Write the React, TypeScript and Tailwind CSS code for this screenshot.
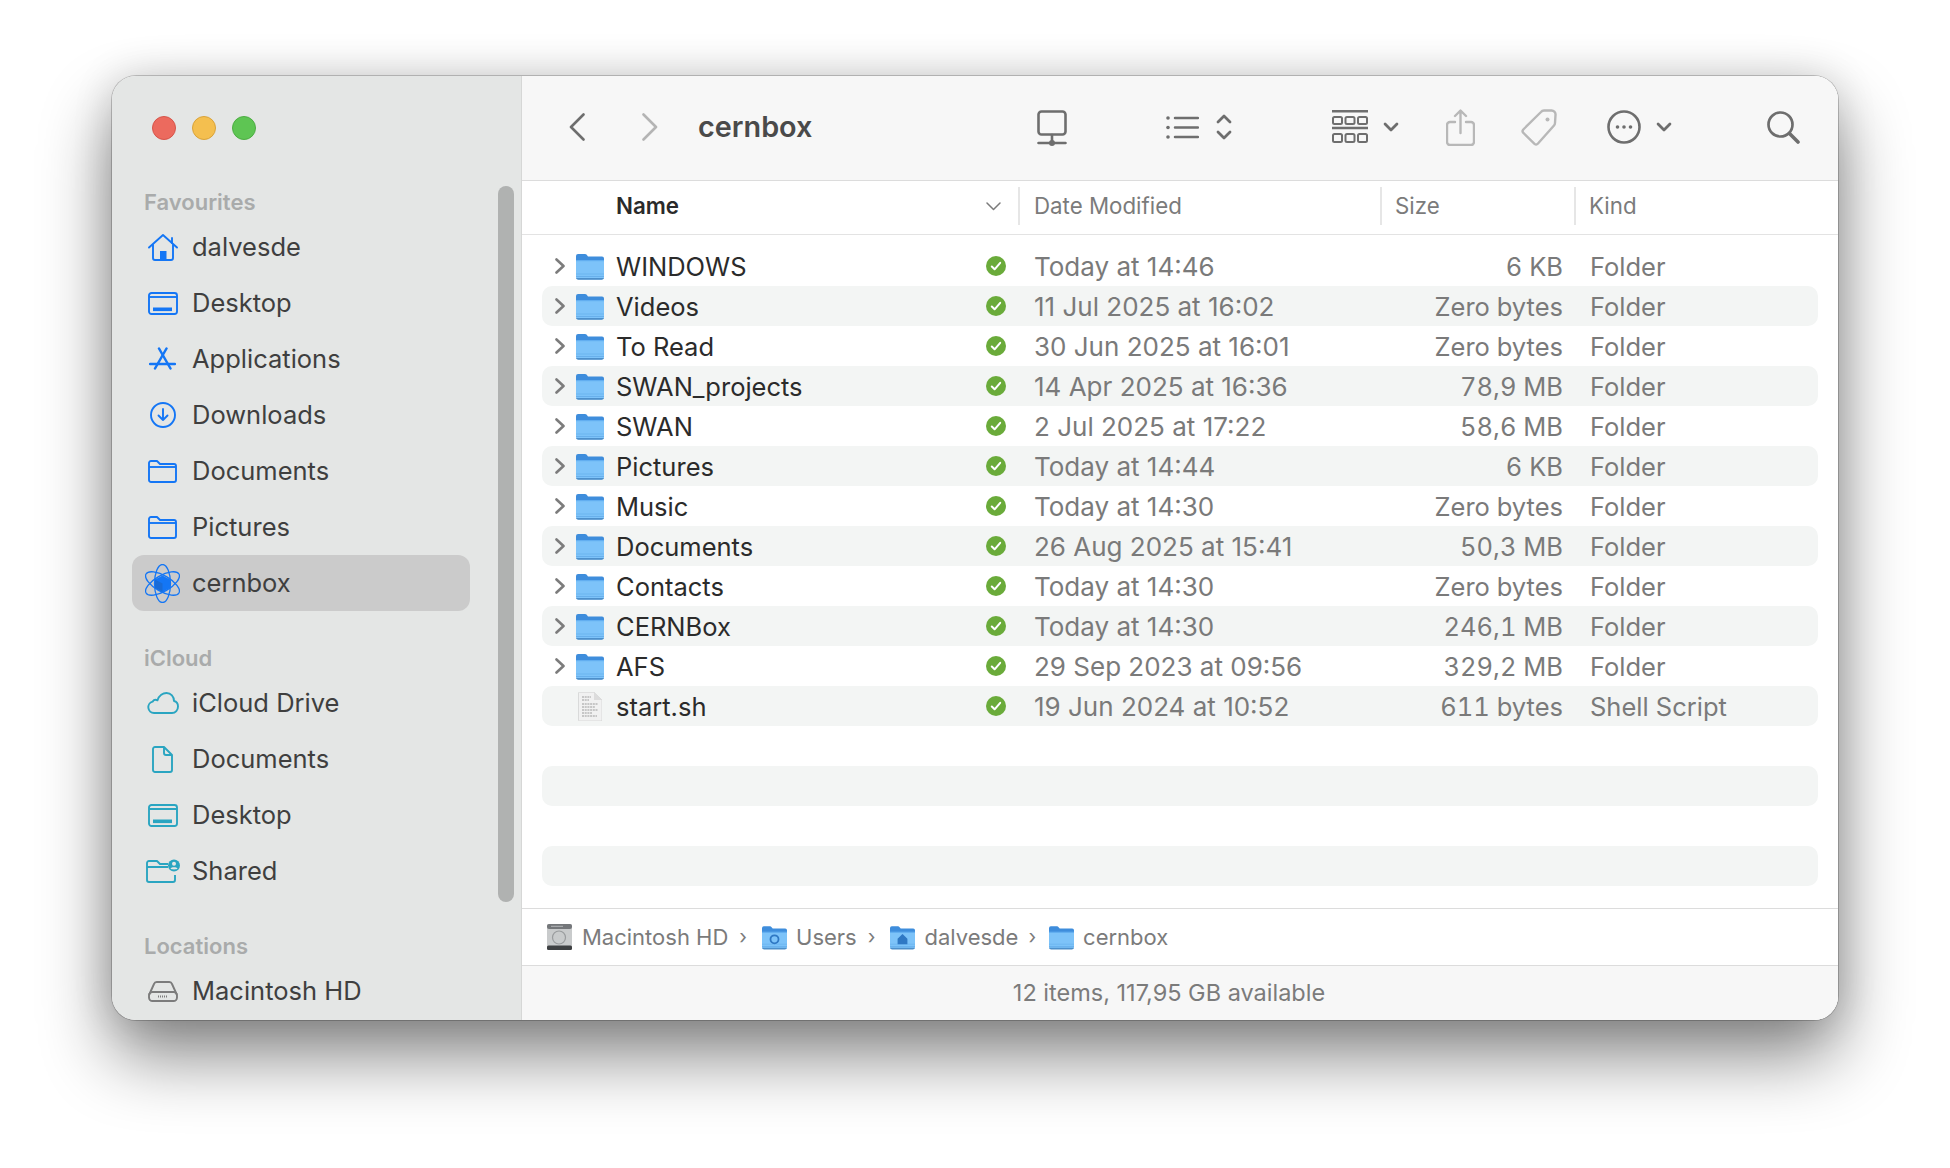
import type { ReactNode } from 'react';

const rows = [
  { name: 'WINDOWS', date: 'Today at 14:46', size: '6 KB', kind: 'Folder' },
  { name: 'Videos', date: '11 Jul 2025 at 16:02', size: 'Zero bytes', kind: 'Folder' },
  { name: 'To Read', date: '30 Jun 2025 at 16:01', size: 'Zero bytes', kind: 'Folder' },
  { name: 'SWAN_projects', date: '14 Apr 2025 at 16:36', size: '78,9 MB', kind: 'Folder' },
  { name: 'SWAN', date: '2 Jul 2025 at 17:22', size: '58,6 MB', kind: 'Folder' },
  { name: 'Pictures', date: 'Today at 14:44', size: '6 KB', kind: 'Folder' },
  { name: 'Music', date: 'Today at 14:30', size: 'Zero bytes', kind: 'Folder' },
  { name: 'Documents', date: '26 Aug 2025 at 15:41', size: '50,3 MB', kind: 'Folder' },
  { name: 'Contacts', date: 'Today at 14:30', size: 'Zero bytes', kind: 'Folder' },
  { name: 'CERNBox', date: 'Today at 14:30', size: '246,1 MB', kind: 'Folder' },
  { name: 'AFS', date: '29 Sep 2023 at 09:56', size: '329,2 MB', kind: 'Folder' },
  { name: 'start.sh', date: '19 Jun 2024 at 10:52', size: '611 bytes', kind: 'Shell Script' },
];

function HomeIcon() {
  return (
    <svg width="30" height="27" viewBox="0 0 30 27" fill="none" stroke="currentColor" strokeWidth="1.9" strokeLinejoin="round" strokeLinecap="round">
      <path d="M1 13.5 15 1l14 12.5" />
      <path d="M24 4v5" />
      <path d="M5 11v13a2 2 0 0 0 2 2h16a2 2 0 0 0 2-2V11" />
      <rect x="12" y="17" width="6.5" height="9" fill="currentColor" stroke="none" />
    </svg>
  );
}

function DesktopIcon() {
  return (
    <svg width="30" height="23" viewBox="0 0 30 23" fill="none" stroke="currentColor" strokeWidth="1.9">
      <rect x="1" y="1" width="28" height="21" rx="2.5" />
      <path d="M1 5h28" />
      <rect x="5" y="15.5" width="19" height="3.6" fill="currentColor" stroke="none" />
    </svg>
  );
}

function AppsIcon() {
  return (
    <svg width="27" height="24" viewBox="0 0 27 24" fill="none" stroke="currentColor" strokeWidth="2.5" strokeLinecap="round">
      <path d="M10 1.5 21.5 21.500" />
      <path d="M17.500 1.500 6 21.500" />
      <path d="M1 17h25" />
    </svg>
  );
}

function DownloadIcon() {
  return (
    <svg width="26" height="26" viewBox="0 0 26 26" fill="none" stroke="currentColor" strokeWidth="1.9" strokeLinecap="round" strokeLinejoin="round">
      <circle cx="13" cy="13" r="12" />
      <path d="M13 7v11M8.5 13.5 13 18l4.5-4.5" />
    </svg>
  );
}

function FolderOutline() {
  return (
    <svg width="29" height="23" viewBox="0 0 29 23" fill="none" stroke="currentColor" strokeWidth="1.9" strokeLinejoin="round">
      <path d="M1 6V3a2 2 0 0 1 2-2h6l3 3h14a2 2 0 0 1 2 2v14a2 2 0 0 1-2 2H3a2 2 0 0 1-2-2Z" />
      <path d="M1 7h27" />
    </svg>
  );
}

function AtomIcon() {
  return (
    <svg width="35" height="39" viewBox="0 0 35 39" fill="none" stroke="currentColor" strokeWidth="1.3">
      <ellipse cx="17.5" cy="19.5" rx="8" ry="19" />
      <ellipse cx="17.5" cy="19.5" rx="8" ry="19" transform="rotate(60 17.5 19.5)" />
      <ellipse cx="17.5" cy="19.5" rx="8" ry="19" transform="rotate(-60 17.5 19.5)" />
      <path d="M17.5 11.5 25 15.5v8.5l-7.5 4-7.5-4v-8.5Z" fill="currentColor" stroke="none" />
      <path d="M10 15.5 17.5 19.5V28l-7.5-4Z" fill="#2c3f5c" stroke="none" opacity="0.2" />
    </svg>
  );
}

function CloudIcon() {
  return (
    <svg width="32" height="22" viewBox="0 0 32 22" fill="none" stroke="currentColor" strokeWidth="1.9" strokeLinejoin="round">
      <path d="M7 21a5.8 5.8 0 0 1-1.4-11.4C7 7.5 9 7.6 10.5 8.3 12 3.5 16 1 19.5 1c4.5 0 7.5 3.5 7.5 8 2.5.6 4 2.8 4 5.5 0 3.600-2.500 6.500-6 6.500Z" />
    </svg>
  );
}

function DocIcon() {
  return (
    <svg width="21" height="27" viewBox="0 0 21 27" fill="none" stroke="currentColor" strokeWidth="1.9" strokeLinejoin="round">
      <path d="M3 1h9l8 8v15a2 2 0 0 1-2 2H3a2 2 0 0 1-2-2V3a2 2 0 0 1 2-2Z" />
      <path d="M12 1v6a2 2 0 0 0 2 2h6" />
    </svg>
  );
}

function SharedIcon() {
  return (
    <svg width="34" height="24" viewBox="0 0 34 24" fill="none" stroke="currentColor" strokeWidth="1.9" strokeLinejoin="round">
      <path d="M22 5h-8l-3-3H3a2 2 0 0 0-2 2v17a2 2 0 0 0 2 2h24a2 2 0 0 0 2-2v-5" />
      <path d="M1 8h21" />
      <circle cx="28" cy="6.500" r="6" fill="currentColor" stroke="none" />
      <circle cx="28" cy="4.800" r="2" fill="#e4e6e5" stroke="none" />
      <path d="M24.500 9.500c1-1.800 6-1.800 7 0-1 1.200-6 1.200-7 0Z" fill="#e4e6e5" stroke="none" />
    </svg>
  );
}

function DriveIcon() {
  return (
    <svg width="30" height="21" viewBox="0 0 30 21" fill="none" stroke="currentColor" strokeWidth="1.9" strokeLinejoin="round">
      <path d="M1 14 6 3a3 3 0 0 1 2.700-2h12.600A3 3 0 0 1 24 3l5 11" />
      <rect x="1" y="11" width="28" height="9" rx="3.500" />
      <path d="M10 15.500h10" strokeWidth="2.200" strokeDasharray="1 1" />
    </svg>
  );
}

function Folder({ w = 28, h = 27, children }: { w?: number; h?: number; children?: ReactNode }) {
  return (
    <svg width={w} height={h} viewBox="0 0 28 27">
      <path d="M0 3a2 2 0 0 1 2-2h7a2 2 0 0 1 1.500.6L12 3.500h14a2 2 0 0 1 2 2V12H0Z" fill="#3e8ddc" />
      <path d="M0 7.500h28V24a2.500 2.500 0 0 1-2.500 2.500h-23A2.500 2.500 0 0 1 0 24Z" fill="#7dc3f9" />
      <rect x="0" y="7" width="28" height="1.200" fill="#62aef0" />
      <rect x="0" y="20.500" width="28" height="1" fill="#6db5f0" />
      <rect x="0" y="23" width="28" height="1" fill="#68b0ec" />
      <path d="M0 25h28a2.500 2.500 0 0 1-2.500 1.800h-23A2.500 2.500 0 0 1 0 25Z" fill="#4d8fca" />
      {children}
    </svg>
  );
}

function FileIcon() {
  return (
    <svg width="24" height="29" viewBox="0 0 24 29">
      <path d="M.5 1a.8.8 0 0 1 .8-.8H16L24 8v20a1 1 0 0 1-1 1H1.500a1 1 0 0 1-1-1Z" fill="#f1f1f1" stroke="#cfcfcf" strokeWidth="0.7" />
      <path d="M16 .2V8h8Z" fill="#dcdcdc" />
      <path d="M4 5h9M4 8h7M4 12h16M4 15h13M4 18h16M4 21h10M4 24h15" stroke="#9c9c9c" strokeWidth="1.200" strokeDasharray="2 0.700" />
    </svg>
  );
}

function DiskIcon() {
  return (
    <svg width="25" height="26" viewBox="0 0 25 26">
      <rect x="0" y="0" width="25" height="26" rx="2" fill="#c9cbcc" />
      <rect x="0" y="0" width="25" height="5" rx="2" fill="#74777a" />
      <rect x="0" y="21.500" width="25" height="4.500" rx="1.500" fill="#3e4042" />
      <circle cx="12" cy="13.500" r="6.500" fill="none" stroke="#9a9c9e" strokeWidth="1.200" />
      <rect x="4" y="1.800" width="12" height="1" fill="#b4b6b8" />
    </svg>
  );
}

function Check() {
  return (
    <svg width="20" height="20" viewBox="0 0 20 20" fill="none">
      <circle cx="10" cy="10" r="10" fill="#6aab3a" />
      <path d="M5.800 10.500 8.600 13.300 14.200 6.800" stroke="#fff" strokeWidth="2" strokeLinecap="round" strokeLinejoin="round" />
    </svg>
  );
}

function DownChevron({ size = 16, className = '' }: { size?: number; className?: string }) {
  return (
    <svg width={size} height={size * 0.62} viewBox="0 0 16 10" fill="none" stroke="currentColor" strokeWidth="2.800" strokeLinecap="round" strokeLinejoin="round" className={className}>
      <path d="M2 2 8 8l6-6" />
    </svg>
  );
}

function SideHeading({ children, first }: { children: ReactNode; first?: boolean }) {
  return (
    <div className={`h-[34px] pl-[12px] flex items-center text-[22px] font-semibold text-[#a9abab] ${first ? '' : 'mt-[30px]'}`}>
      {children}
    </div>
  );
}

function SideRow({ icon, label, active, tone = 'text-[#1476f5]' }: { icon: ReactNode; label: string; active?: boolean; tone?: string }) {
  return (
    <div className={`h-[56px] w-[338px] flex items-center rounded-[12px] ${active ? 'bg-[#cbcbcb]' : ''}`}>
      <div className={`w-[61px] -mr-[1px] flex justify-center ${tone}`}>{icon}</div>
      <span className="text-[25.5px] text-[#3f3f3f]">{label}</span>
    </div>
  );
}

export default function App() {
  return (
    <div className="w-[1950px] h-[1168px] overflow-hidden bg-white pt-[76px] pl-[112px] font-['Inter',sans-serif]">
      <div className="w-[1726px] h-[944px] flex rounded-[24px] overflow-hidden shadow-[0_0_0_1px_rgba(0,0,0,0.2),0_36px_70px_rgba(0,0,0,0.48),0_0_40px_rgba(0,0,0,0.14)]">
        {/* Sidebar */}
        <aside className="relative w-[410px] h-full bg-[#e4e6e5] border-r border-[#d6d7d6] pl-[20px]">
          <div className="flex gap-[16px] pt-[40px] pl-[20px]">
            <span className="w-[24px] h-[24px] rounded-full bg-[#ec6a5e] border border-[#d6554a]" />
            <span className="w-[24px] h-[24px] rounded-full bg-[#f4bf4f] border border-[#d9a33a]" />
            <span className="w-[24px] h-[24px] rounded-full bg-[#5ec553] border border-[#4dad43]" />
          </div>
          <div className="mt-[45px]">
            <SideHeading first>Favourites</SideHeading>
            <SideRow icon={<HomeIcon />} label="dalvesde" />
            <SideRow icon={<DesktopIcon />} label="Desktop" />
            <SideRow icon={<AppsIcon />} label="Applications" />
            <SideRow icon={<DownloadIcon />} label="Downloads" />
            <SideRow icon={<FolderOutline />} label="Documents" />
            <SideRow icon={<FolderOutline />} label="Pictures" />
            <SideRow icon={<AtomIcon />} label="cernbox" active />
            <SideHeading>iCloud</SideHeading>
            <SideRow icon={<CloudIcon />} label="iCloud Drive" tone="text-[#2aa5c1]" />
            <SideRow icon={<DocIcon />} label="Documents" tone="text-[#2aa5c1]" />
            <SideRow icon={<DesktopIcon />} label="Desktop" tone="text-[#2aa5c1]" />
            <SideRow icon={<SharedIcon />} label="Shared" tone="text-[#2aa5c1]" />
            <SideHeading>Locations</SideHeading>
            <SideRow icon={<DriveIcon />} label="Macintosh HD" tone="text-[#7c7c7c]" />
          </div>
          {/* overlay scrollbar */}
          <div className="absolute left-[386px] top-[110px] w-[16px] h-[716px] rounded-full bg-[#b0b2b1]" />
        </aside>

        {/* Main */}
        <main className="flex-1 h-full flex flex-col bg-white">
          <div className="h-[105px] shrink-0 bg-[#f7f7f7] border-b border-[#dcdcdc] flex items-center pl-[47px] pb-[2px] text-[#6e6e6e]">
            <svg width="16" height="28" viewBox="0 0 16 28" fill="none" stroke="currentColor" strokeWidth="2.600" strokeLinecap="round" strokeLinejoin="round">
              <path d="M14.500 1.500 2 14l12.500 12.500" />
            </svg>
            <svg width="16" height="28" viewBox="0 0 16 28" fill="none" stroke="#b4b4b4" strokeWidth="2.600" strokeLinecap="round" strokeLinejoin="round" className="ml-[57px]">
              <path d="M1.500 1.500 14 14 1.500 26.500" />
            </svg>
            <span className="ml-[40px] w-[339px] text-[28.800px] font-semibold text-[#4a4a4a]">cernbox</span>
            {/* network */}
            <svg width="30" height="36" viewBox="0 0 30 36" fill="none" stroke="currentColor" strokeWidth="2.600" strokeLinecap="round" strokeLinejoin="round" className="mt-[1px]">
              <rect x="1.500" y="1.500" width="27" height="23" rx="3" />
              <path d="M15 25v8M1.500 33h27" />
              <circle cx="15" cy="33" r="3" fill="currentColor" stroke="none" />
            </svg>
            {/* list */}
            <svg width="33" height="23" viewBox="0 0 33 23" fill="none" stroke="currentColor" strokeWidth="2.500" strokeLinecap="round" className="ml-[99px]">
              <path d="M9 2h23M9 11.500h23M9 21h23" />
              <circle cx="2" cy="2" r="1.800" fill="currentColor" stroke="none" />
              <circle cx="2" cy="11.500" r="1.800" fill="currentColor" stroke="none" />
              <circle cx="2" cy="21" r="1.800" fill="currentColor" stroke="none" />
            </svg>
            <svg width="16" height="26" viewBox="0 0 16 26" fill="none" stroke="currentColor" strokeWidth="2.800" strokeLinecap="round" strokeLinejoin="round" className="ml-[17px]">
              <path d="M2 8l6-6 6 6M2 18l6 6 6-6" />
            </svg>
            {/* gallery */}
            <svg width="36" height="35" viewBox="0 0 36 35" fill="none" stroke="currentColor" strokeWidth="2" className="ml-[100px]">
              <path d="M0 1.200h36M0 18h36" strokeWidth="2.600" />
              <rect x="1" y="7" width="9" height="7" rx="1.500" />
              <rect x="13.500" y="7" width="9" height="7" rx="1.500" />
              <rect x="26" y="7" width="9" height="7" rx="1.500" />
              <rect x="1" y="24" width="9" height="8" rx="1.500" />
              <rect x="13.500" y="24" width="9" height="8" rx="1.500" />
              <rect x="26" y="24" width="9" height="8" rx="1.500" />
            </svg>
            <DownChevron className="ml-[15px]" />
            {/* share */}
            <svg width="29" height="37" viewBox="0 0 29 37" fill="none" stroke="#b8b8b8" strokeWidth="2.400" strokeLinecap="round" strokeLinejoin="round" className="ml-[47px]">
              <path d="M9 13H4a3 3 0 0 0-3 3v17a3 3 0 0 0 3 3h21a3 3 0 0 0 3-3V16a3 3 0 0 0-3-3h-5" />
              <path d="M14.500 24V2M9 7l5.500-5.500L20 7" />
            </svg>
            {/* tag */}
            <svg width="36" height="37" viewBox="0 0 36 37" fill="none" stroke="#b8b8b8" strokeWidth="2.400" strokeLinejoin="round" className="ml-[46px]">
              <path d="M23 1.500h7a4 4 0 0 1 4.500 4.500l-.5 8a4 4 0 0 1-1 2.500L17 34.500a2.500 2.500 0 0 1-3.500.3L2.500 24a2.500 2.500 0 0 1-.2-3.500L20 3a4 4 0 0 1 3-1.500Z" />
              <circle cx="26.500" cy="10.500" r="2" fill="#b8b8b8" stroke="none" />
            </svg>
            {/* more */}
            <svg width="34" height="34" viewBox="0 0 34 34" fill="none" stroke="currentColor" strokeWidth="2.600" className="ml-[50px]">
              <circle cx="17" cy="17" r="15.500" />
              <circle cx="10.500" cy="17" r="1.800" fill="currentColor" stroke="none" />
              <circle cx="17" cy="17" r="1.800" fill="currentColor" stroke="none" />
              <circle cx="23.500" cy="17" r="1.800" fill="currentColor" stroke="none" />
            </svg>
            <DownChevron className="ml-[15px]" />
            {/* search */}
            <svg width="33" height="33" viewBox="0 0 33 33" fill="none" stroke="currentColor" strokeWidth="2.700" strokeLinecap="round" className="ml-[95px]">
              <circle cx="13.500" cy="13.500" r="12" />
              <path d="M22.500 22.500 31 31" strokeWidth="3.600" />
            </svg>
          </div>

          {/* Column headers */}
          <div className="h-[54px] shrink-0 border-b border-[#e3e3e3] flex items-center pb-[3px] text-[22.300px] text-[#7b7b7b]">
            <span className="ml-[94px] w-[370px] font-semibold text-[#2a2a2a]">Name</span>
            <svg width="15" height="9" viewBox="0 0 15 9" fill="none" stroke="#7b7b7b" strokeWidth="1.500" strokeLinecap="round" strokeLinejoin="round">
              <path d="M1 1l6.500 6.500L14 1" />
            </svg>
            <div className="ml-[17px] w-[2px] h-[38px] bg-[#e6e6e6]" />
            <span className="ml-[14px] w-[346px]">Date Modified</span>
            <div className="w-[2px] h-[38px] bg-[#e6e6e6]" />
            <span className="ml-[13px] w-[179px]">Size</span>
            <div className="w-[2px] h-[38px] bg-[#e6e6e6]" />
            <span className="ml-[13px]">Kind</span>
          </div>

          {/* Rows */}
          <div className="flex-1 px-[20px] pt-[11px]">
            {rows.map((r, i) => (
              <div key={r.name} className={`h-[40px] flex items-center rounded-[10px] text-[25.500px] ${i % 2 === 1 ? 'bg-[#f3f5f4]' : ''}`}>
                <div className="ml-[13px] w-[10px] flex">
                  {r.kind === 'Folder' && (
                    <svg width="10" height="16" viewBox="0 0 10 16" fill="none" stroke="#7c7c7c" strokeWidth="2.600" strokeLinecap="round" strokeLinejoin="round">
                      <path d="M1.500 1.500 8.500 8 1.500 14.500" />
                    </svg>
                  )}
                </div>
                <div className="ml-[11px] w-[28px] flex justify-center">
                  {r.kind === 'Folder' ? <Folder /> : <FileIcon />}
                </div>
                <span className="ml-[12px] w-[370px] pt-[2px] text-[#2b2b2b]">{r.name}</span>
                <Check />
                <span className="ml-[28px] w-[341px] text-[26px] text-[#7a7a7a]">{r.date}</span>
                <span className="w-[188px] pt-[2px] text-right text-[#7a7a7a] tabular-nums">{r.size}</span>
                <span className="ml-[27px] pt-[2px] text-[#7a7a7a]">{r.kind}</span>
              </div>
            ))}
            <div className="h-[40px] mt-[40px] rounded-[10px] bg-[#f3f5f4]" />
            <div className="h-[40px] mt-[40px] rounded-[10px] bg-[#f3f5f4]" />
          </div>

          {/* Path bar */}
          <div className="h-[57px] shrink-0 border-t border-[#dcdcdc] flex items-center pl-[25px] text-[22px] text-[#7b7b7b]">
            <DiskIcon />
            <span className="ml-[10px]">Macintosh HD</span>
            <span className="ml-[11px] mr-[15px] text-[20px]">›</span>
            <Folder w={25} h={25}>
              <circle cx="14" cy="15.500" r="4.500" fill="none" stroke="#2f78c4" strokeWidth="2" />
            </Folder>
            <span className="ml-[9px]">Users</span>
            <span className="ml-[11px] mr-[15px] text-[20px]">›</span>
            <Folder w={25} h={25}>
              <path d="M14 9.500 19.500 15v6h-11v-6Z" fill="#2f78c4" />
            </Folder>
            <span className="ml-[9px]">dalvesde</span>
            <span className="ml-[10px] mr-[13px] text-[20px]">›</span>
            <Folder w={25} h={25} />
            <span className="ml-[9px]">cernbox</span>
          </div>

          {/* Status bar */}
          <div className="h-[55px] shrink-0 border-t border-[#dcdcdc] bg-[#f7f7f7] flex items-center justify-center pr-[22px] text-[23.500px] text-[#7b7b7b]">
            12 items, 117,95 GB available
          </div>
        </main>
      </div>
    </div>
  );
}
